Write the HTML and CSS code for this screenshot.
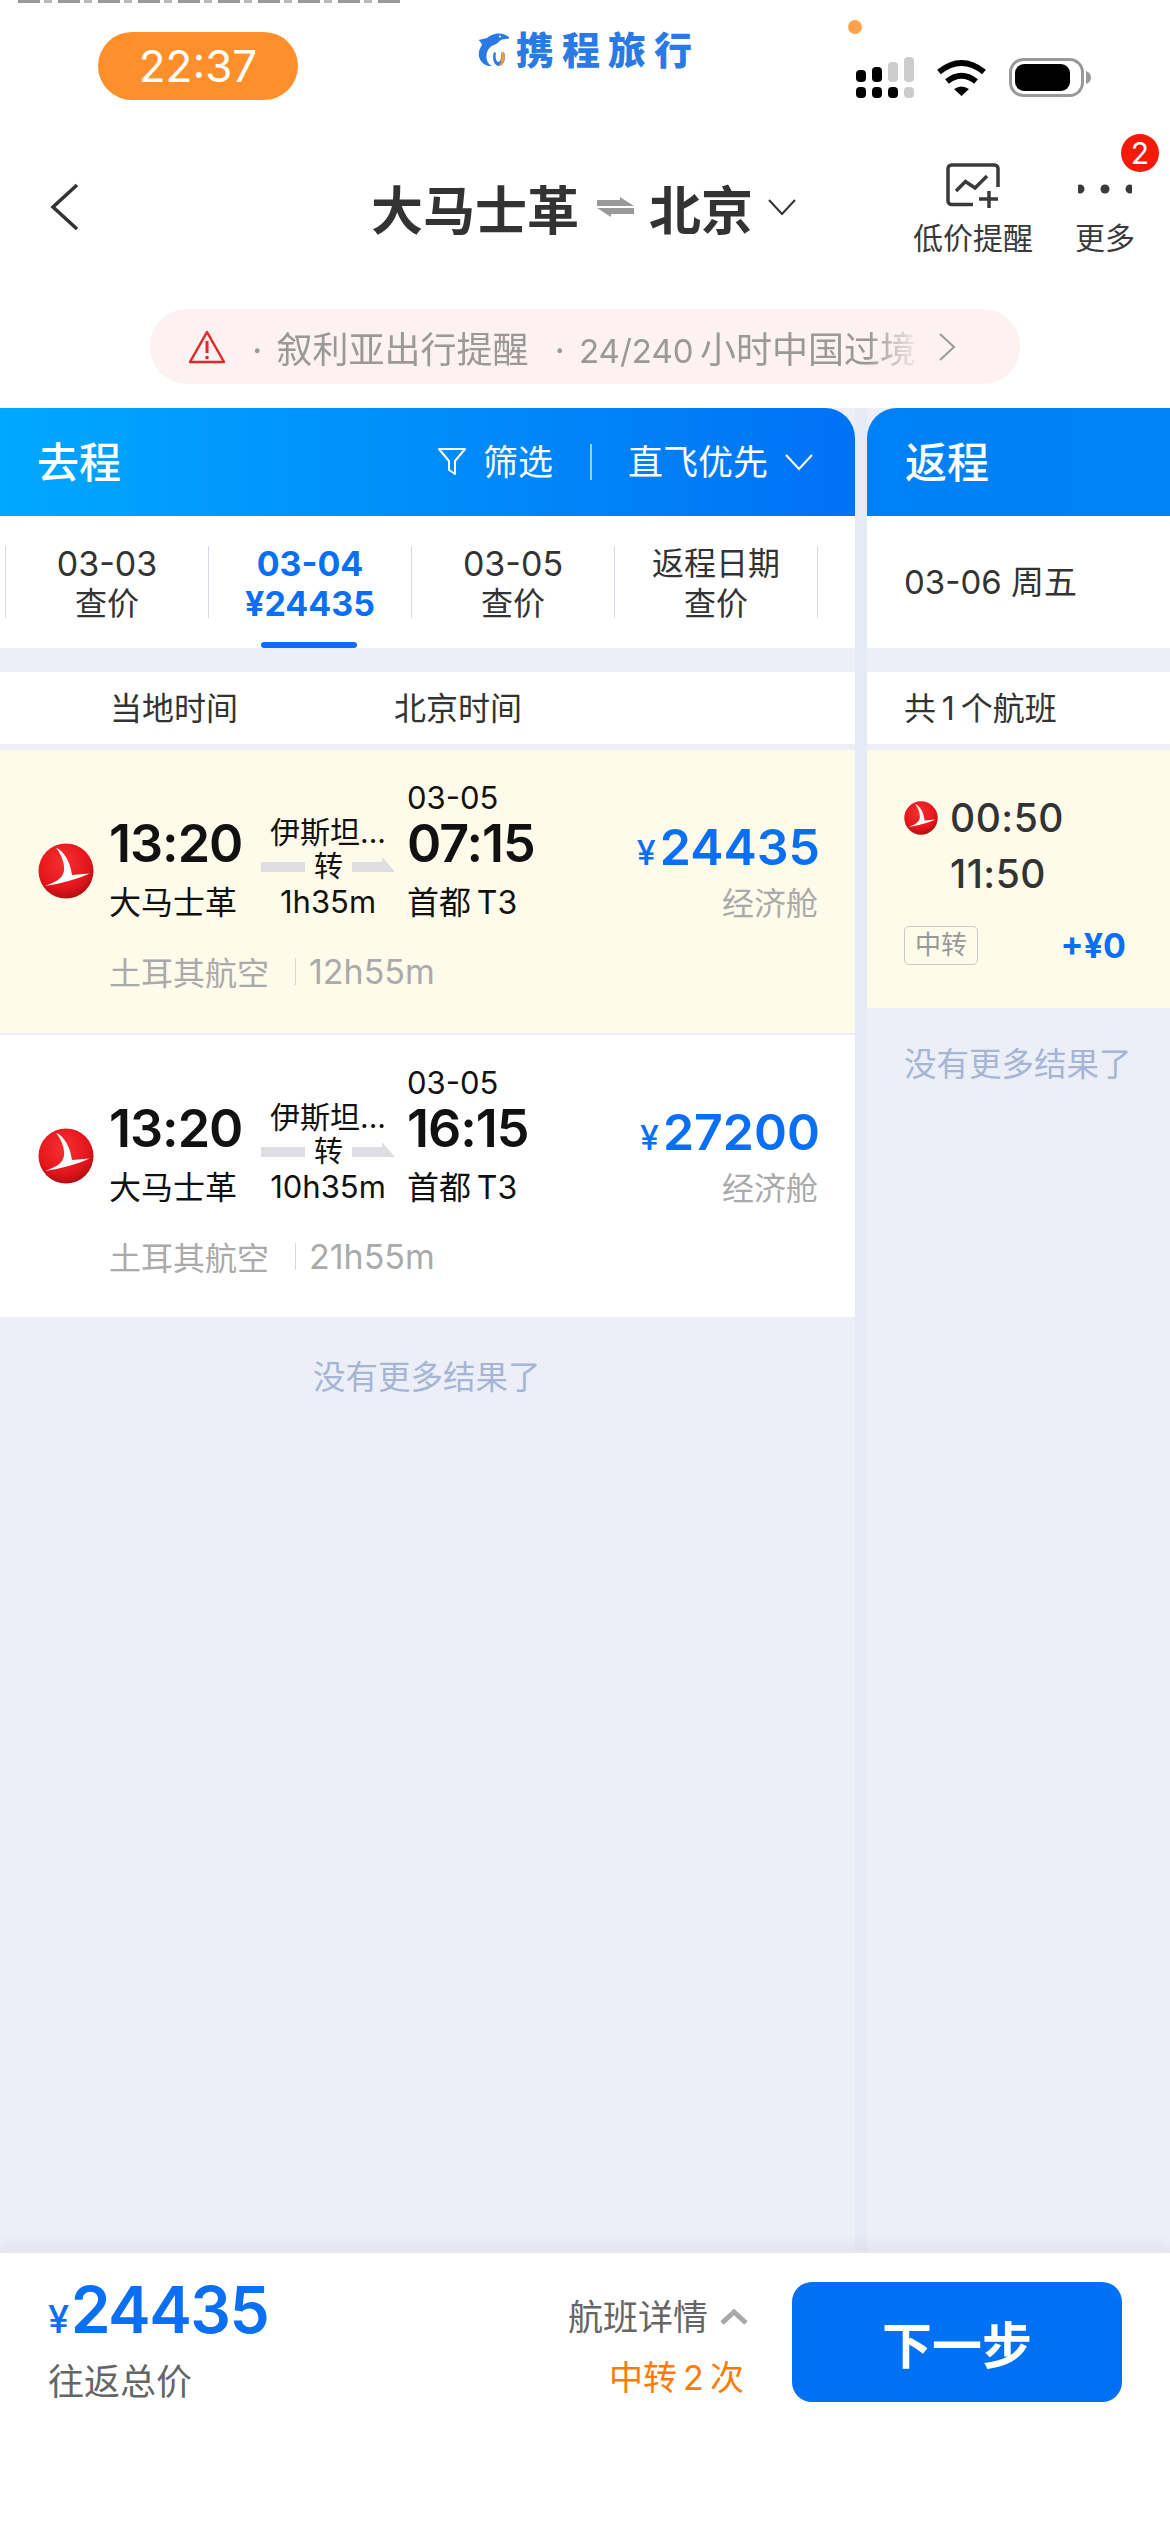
FILE: index.html
```html
<!DOCTYPE html>
<html lang="zh-CN">
<head>
    <meta charset="UTF-8">
    <meta name="viewport" content="width=device-width, initial-scale=1.0">
    <title>大马士革 - 北京</title>
    <link rel="stylesheet" href="styles.css">
</head>
<body>

    <svg class="defs" width="0" height="0">
        <defs>
            <radialGradient id="thyRed" cx="45%" cy="35%" r="70%">
                <stop offset="0%" stop-color="#f7302f"/>
                <stop offset="65%" stop-color="#e5161c"/>
                <stop offset="100%" stop-color="#a80c10"/>
            </radialGradient>
            <symbol id="thyLogo" viewBox="0 0 56 56">
                <circle cx="28" cy="28" r="27.5" fill="url(#thyRed)"/>
                <path d="M18 4.700C26 8 32 18 34 32L51.500 30.500C40 36 22 41 7 43C18 39 24 36 26 28C27 20 23 11 18 4.700Z" fill="#fff"/>
            </symbol>
        </defs>
    </svg>

    <div class="top-strip"></div>

    <div class="status">
        <div class="clock">22:37</div>
        <div class="brand">
            <svg class="dolphin" viewBox="0 0 32 34" width="32" height="34">
                <path d="M31 4C27 1 23 0 19 .5C15 1 11 3 9 5L.5 7C2 8 3.500 10 4 12C1 16 0 21 1.500 25C3 30 8 33.500 14 33C10 31 8 27 8.500 22C9 17 12 13 17 11.500C19 11 21 8 24 6.500L31 5.500Z" fill="#2a7ae4"/>
                <path d="M16 19C14 24 15 31 20 33C24 33.500 27 29 27 24C27 22 26.500 20 25.500 19L23 20C23.500 24 23 29 20 29C18 28 17 24 18 20Z" fill="#2a7ae4"/>
                <path d="M23 20L25.500 19C27 21 27.500 25 26 28C25 31 23 33 20 33C23 31 24 26 23 20Z" fill="#f39a2b"/>
                <circle cx="22" cy="3.500" r="1" fill="#fff"/>
            </svg>
            <span class="brand-name">携程旅行</span>
        </div>
        <div class="status-icons">
            <svg width="58" height="41" viewBox="0 0 58 41">
                <rect x="0" y="13" width="10" height="12" rx="4" fill="#000"/>
                <rect x="16" y="10" width="10" height="15" rx="4" fill="#000"/>
                <rect x="32" y="5" width="10" height="20" rx="4" fill="#ccc"/>
                <rect x="48" y="0" width="10" height="25" rx="4" fill="#ccc"/>
                <rect x="0" y="30" width="10" height="11" rx="4" fill="#000"/>
                <rect x="16" y="30" width="10" height="11" rx="4" fill="#000"/>
                <rect x="32" y="30" width="10" height="11" rx="4" fill="#000"/>
                <rect x="48" y="30" width="10" height="11" rx="4" fill="#ccc"/>
            </svg>
            <svg width="51" height="38" viewBox="0 0 51 38">
                <path d="M3 13Q25.500 -5 48 13" fill="none" stroke="#000" stroke-width="6"/>
                <path d="M11 22.500Q25.500 11 40 22.500" fill="none" stroke="#000" stroke-width="6"/>
                <path d="M18 30Q25.500 25 33 30L25.500 37Z" fill="#000"/>
            </svg>
            <svg width="82" height="39" viewBox="0 0 82 39">
                <rect x="1.500" y="1.500" width="72" height="36" rx="13" fill="none" stroke="#999" stroke-width="3"/>
                <rect x="6" y="6" width="55" height="27" rx="9" fill="#000"/>
                <path d="M77 13C80 14 82 16 82 19.500C82 23 80 25 77 26Z" fill="#999"/>
            </svg>
        </div>
        <span class="rec-dot"></span>
    </div>

    <header class="nav">
        <svg class="back" width="30" height="48" viewBox="0 0 30 48">
            <path d="M27 2L3 24L27 46" fill="none" stroke="#333" stroke-width="3.500"/>
        </svg>
        <div class="route">
            <span>大马士革</span>
            <svg class="route-swap" width="37" height="20" viewBox="0 0 37 20">
                <path d="M0 3H23V0L37 9H0Z" fill="#999"/>
                <path d="M37 11H0L14 20V17H37Z" fill="#999"/>
            </svg>
            <span>北京</span>
            <svg class="route-down" width="28" height="17" viewBox="0 0 28 17">
                <path d="M1 1L14 15L27 1" fill="none" stroke="#333" stroke-width="2"/>
            </svg>
        </div>
        <div class="nav-actions">
            <div class="action">
                <svg width="54" height="46" viewBox="0 0 54 46">
                    <path d="M52 24V5.500A3.500 3.500 0 0 0 48.500 2H5.500A3.500 3.500 0 0 0 2 5.500V38A3.500 3.500 0 0 0 5.500 41.500H27" fill="none" stroke="#3a3a3a" stroke-width="3.500"/>
                    <path d="M10 28L19.500 18.500L29 25L41 13" fill="none" stroke="#3a3a3a" stroke-width="3.500"/>
                    <path d="M33 36H52M43 28V45" fill="none" stroke="#3a3a3a" stroke-width="3.500"/>
                </svg>
                <span>低价提醒</span>
            </div>
            <div class="action">
                <svg width="54" height="46" viewBox="0 0 54 46">
                    <circle cx="2" cy="26" r="4.500" fill="#3a3a3a"/>
                    <circle cx="27" cy="26" r="4.500" fill="#3a3a3a"/>
                    <circle cx="52" cy="26" r="4.500" fill="#3a3a3a"/>
                </svg>
                <span>更多</span>
                <b class="badge">2</b>
            </div>
        </div>
    </header>

    <div class="notice">
        <svg width="38" height="36" viewBox="0 0 38 36">
            <path d="M19 3L36 33H2Z" fill="none" stroke="#e0292b" stroke-width="2.500" stroke-linejoin="round"/>
            <path d="M19 12V24" stroke="#e0292b" stroke-width="3"/>
            <circle cx="19" cy="28.500" r="1.800" fill="#e0292b"/>
        </svg>
        <div class="notice-text">
            <span>· 叙利亚出行提醒</span>
            <span>· <span class="notice-num">24/240</span>&thinsp;小时中国过境</span>
        </div>
        <svg width="18" height="28" viewBox="0 0 18 28">
            <path d="M2 1L16 14L2 27" fill="none" stroke="#999" stroke-width="2"/>
        </svg>
    </div>

    <main class="board">
        <section class="col col-out">
            <div class="col-head head-out">
                <span class="col-title">去程</span>
                <div class="head-tools">
                    <svg width="30" height="30" viewBox="0 0 30 30">
                        <path d="M2 2H28L18 14V27L12 23V14Z" fill="none" stroke="#fff" stroke-width="2" stroke-linejoin="round"/>
                    </svg>
                    <span class="tool-filter">筛选</span>
                    <i class="tool-sep"></i>
                    <span>直飞优先</span>
                    <svg class="tool-down" width="28" height="17" viewBox="0 0 28 17">
                        <path d="M1 1L14 15L27 1" fill="none" stroke="#fff" stroke-width="2"/>
                    </svg>
                </div>
            </div>

            <div class="tabs">
                <div class="tab"><span class="tab-num">03-03</span><span>查价</span></div>
                <div class="tab active"><span class="tab-num">03-04</span><span class="tab-num">¥24435</span></div>
                <div class="tab"><span class="tab-num">03-05</span><span>查价</span></div>
                <div class="tab"><span>返程日期</span><span>查价</span></div>
            </div>

            <div class="zone-row">
                <span class="zone-local">当地时间</span>
                <span>北京时间</span>
            </div>

            <article class="flight picked">
                <svg class="flight-logo" width="56" height="56"><use href="#thyLogo"/></svg>
                <div class="leg">
                    <div class="clock-time">13:20</div>
                    <div class="leg-sub">大马士革</div>
                </div>
                <div class="stop">
                    <div class="stop-city">伊斯坦...</div>
                    <div class="stop-line">
                        <i class="line-left"></i>
                        <span>转</span>
                        <svg width="43" height="15" viewBox="0 0 43 15"><path d="M0 5H30V0L43 15H0Z" fill="#dddde2"/></svg>
                    </div>
                    <div class="stop-time">1h35m</div>
                </div>
                <div class="leg leg-arrive">
                    <div class="leg-date">03-05</div>
                    <div class="clock-time">07:15</div>
                    <div class="leg-sub">首都&thinsp;T3</div>
                </div>
                <div class="fare">
                    <div class="fare-price"><small>¥</small>24435</div>
                    <div class="fare-class">经济舱</div>
                </div>
                <div class="flight-foot">
                    <span>土耳其航空</span>
                    <i class="foot-sep"></i>
                    <span class="foot-time">12h55m</span>
                </div>
            </article>

            <article class="flight">
                <svg class="flight-logo" width="56" height="56"><use href="#thyLogo"/></svg>
                <div class="leg">
                    <div class="clock-time">13:20</div>
                    <div class="leg-sub">大马士革</div>
                </div>
                <div class="stop">
                    <div class="stop-city">伊斯坦...</div>
                    <div class="stop-line">
                        <i class="line-left"></i>
                        <span>转</span>
                        <svg width="43" height="15" viewBox="0 0 43 15"><path d="M0 5H30V0L43 15H0Z" fill="#dddde2"/></svg>
                    </div>
                    <div class="stop-time">10h35m</div>
                </div>
                <div class="leg leg-arrive">
                    <div class="leg-date">03-05</div>
                    <div class="clock-time">16:15</div>
                    <div class="leg-sub">首都&thinsp;T3</div>
                </div>
                <div class="fare">
                    <div class="fare-price"><small>¥</small>27200</div>
                    <div class="fare-class">经济舱</div>
                </div>
                <div class="flight-foot">
                    <span>土耳其航空</span>
                    <i class="foot-sep"></i>
                    <span class="foot-time">21h55m</span>
                </div>
            </article>

            <div class="no-more no-more-out">没有更多结果了</div>
        </section>

        <section class="col col-ret">
            <div class="col-head head-ret">
                <span class="col-title">返程</span>
            </div>
            <div class="ret-date">03-06 周五</div>
            <div class="zone-row ret-count">共&thinsp;1&thinsp;个航班</div>
            <article class="ret-flight">
                <div class="ret-times">
                    <svg width="34" height="34"><use href="#thyLogo"/></svg>
                    <span>00:50</span>
                    <span class="ret-arrive">11:50</span>
                </div>
                <div class="ret-foot">
                    <span class="tag">中转</span>
                    <span class="ret-extra">+¥0</span>
                </div>
            </article>
            <div class="no-more no-more-ret">没有更多结果了</div>
        </section>
    </main>

    <footer class="bottom">
        <div class="total">
            <div class="total-price"><small>¥</small>24435</div>
            <div class="total-label">往返总价</div>
        </div>
        <div class="details">
            <div class="details-link">
                航班详情
                <svg width="28" height="16" viewBox="0 0 28 16">
                    <path d="M2 14L14 3L26 14" fill="none" stroke="#a8a8a8" stroke-width="5"/>
                </svg>
            </div>
            <div class="details-stops">中转&thinsp;2&thinsp;次</div>
        </div>
        <button class="next" type="button">下一步</button>
    </footer>

</body>
</html>
```

FILE: styles.css
```css
* {
    box-sizing: border-box;
}

body {
    margin: 0;
    width: 1170px;
    height: 2532px;
    overflow: hidden;
    background-color: #fff;
    color: #333;
    font-family: Inter, "Noto Sans CJK SC", sans-serif;
}

i {
    display: block;
}

.defs {
    position: absolute;
}

.top-strip {
    height: 3px;
    margin: 0 770px 0 18px;
    background: repeating-linear-gradient(90deg, #999 0 22px, #fff 22px 26px, #bbb 26px 34px, #fff 34px 40px);
}

/* status bar */
.status {
    position: relative;
    display: flex;
    align-items: flex-start;
    height: 147px;
    padding-left: 98px;
}

.clock {
    width: 200px;
    height: 68px;
    margin-top: 29px;
    border-radius: 34px;
    background-color: #ff8f2b;
    color: #fff;
    font-size: 44px;
    line-height: 68px;
    text-align: center;
}

.brand {
    display: flex;
    align-items: center;
    height: 34px;
    margin: 30px 0 0 180px;
}

.dolphin {
    margin-right: 6px;
}

.brand-name {
    color: #2a7ae4;
    font-size: 38px;
    font-weight: 900;
    line-height: 34px;
    letter-spacing: 8px;
    white-space: nowrap;
}

.status-icons {
    display: flex;
    align-items: center;
    gap: 22px;
    margin: 54px 0 0 auto;
    padding-right: 79px;
}

.rec-dot {
    position: absolute;
    left: 848px;
    top: 17px;
    width: 14px;
    height: 14px;
    border-radius: 50%;
    background-color: #ffa24d;
}

/* nav */
.nav {
    display: flex;
    align-items: flex-start;
    height: 159px;
    padding-left: 50px;
}

.back {
    margin-top: 33px;
}

.route {
    display: flex;
    align-items: center;
    gap: 18px;
    height: 48px;
    margin: 33px 0 0 291px;
    color: #333;
    font-size: 52px;
    font-weight: 700;
    white-space: nowrap;
}

.route-swap {
    margin-right: -3px;
}

.route-down {
    margin-left: -3px;
}

.nav-actions {
    display: flex;
    gap: 37px;
    margin: 13px 30px 0 auto;
}

.action {
    position: relative;
    display: flex;
    flex-direction: column;
    align-items: center;
    min-width: 70px;
    font-size: 30px;
    line-height: 40px;
    color: #3a3a3a;
}

.action span {
    margin-top: 9px;
}

.badge {
    position: absolute;
    left: 51px;
    top: -29px;
    width: 38px;
    height: 38px;
    border-radius: 50%;
    background-color: #f5190a;
    color: #fff;
    font-size: 30px;
    font-weight: 400;
    line-height: 38px;
    text-align: center;
}

/* notice */
.notice {
    display: flex;
    align-items: center;
    width: 870px;
    height: 75px;
    margin-left: 150px;
    padding-left: 38px;
    border-radius: 37px;
    background-color: #fdf1f1;
}

.notice-text {
    display: flex;
    gap: 26px;
    width: 670px;
    margin: 0 16px 0 26px;
    color: #999;
    font-size: 36px;
    word-spacing: 4px;
    white-space: nowrap;
    -webkit-mask-image: linear-gradient(90deg, #000 92%, transparent);
    mask-image: linear-gradient(90deg, #000 92%, transparent);
}

.notice-num {
    font-size: 33px;
}

/* board */
.board {
    display: flex;
    gap: 12px;
    height: 1842px;
    margin-top: 24px;
    background-color: #e6eaf4;
}

.col {
    display: flex;
    flex-direction: column;
    background-color: #eceff7;
}

.col-out {
    width: 855px;
}

.col-ret {
    width: 303px;
    flex: 1;
}

.col-head {
    display: flex;
    align-items: center;
    justify-content: space-between;
    height: 108px;
    color: #fff;
}

.head-out {
    padding: 0 42px 0 37px;
    border-top-right-radius: 30px;
    background: linear-gradient(90deg, #00a8ff, #0072f5);
}

.head-ret {
    padding-left: 38px;
    border-top-left-radius: 30px;
    background: linear-gradient(90deg, #0080f6, #0084f6);
}

.col-title {
    padding-bottom: 6px;
    font-size: 42px;
    font-weight: 500;
}

.head-tools {
    display: flex;
    align-items: center;
    height: 40px;
    font-size: 35px;
    line-height: 38px;
}

.tool-filter {
    margin-left: 16px;
}

.tool-sep {
    width: 2px;
    height: 36px;
    margin: 0 36px 0 37px;
    background-color: rgba(255, 255, 255, 0.6);
}

.tool-down {
    margin-left: 17px;
}

.tabs {
    display: flex;
    height: 132px;
    padding: 30px 0 0 5px;
    background-color: #fff;
}

.tab {
    position: relative;
    display: flex;
    flex-direction: column;
    align-items: center;
    justify-content: center;
    width: 203px;
    height: 72px;
    padding-top: 3px;
    border-left: 1px solid #d5dbe6;
    font-size: 32px;
    line-height: 40px;
}

.tab:last-child {
    width: 204px;
    border-right: 1px solid #d5dbe6;
}

.tab-num {
    font-size: 34px;
}

.tab.active {
    color: #0a6ff5;
    font-weight: 700;
}

.tab.active::after {
    content: "";
    position: absolute;
    left: 52px;
    top: 96px;
    width: 96px;
    height: 6px;
    border-radius: 3px;
    background-color: #0a6ff5;
}

.zone-row {
    display: flex;
    height: 72px;
    margin: 24px 0 6px;
    padding-left: 110px;
    background-color: #fff;
    font-size: 32px;
    line-height: 74px;
}

.zone-local {
    width: 284px;
}

/* flight rows */
.flight {
    display: grid;
    grid-template-columns: 71px 152px 134px 1fr auto;
    padding: 30px 35px 41px 38px;
    margin-bottom: 2px;
    background-color: #fff;
    color: #111;
}

.flight.picked {
    padding-bottom: 42px;
    background-color: #fefbea;
}

.flight-logo {
    margin-top: 63px;
}

.leg {
    padding-top: 34px;
}

.clock-time {
    height: 60px;
    font-size: 52px;
    font-weight: 600;
    line-height: 60px;
    letter-spacing: -1px;
}

.leg-sub {
    height: 60px;
    font-size: 32px;
    line-height: 58px;
    white-space: nowrap;
}

.leg-arrive {
    padding: 0 0 0 12px;
}

.leg-date {
    height: 34px;
    font-size: 31px;
    line-height: 36px;
}

.stop {
    padding-top: 32px;
    text-align: center;
}

.stop-city {
    height: 40px;
    margin: 0 -4px;
    font-size: 30px;
    line-height: 40px;
    white-space: nowrap;
}

.stop-line {
    display: flex;
    align-items: flex-end;
    justify-content: space-between;
    height: 30px;
    padding-bottom: 10px;
    font-size: 29px;
}

.stop-line span {
    height: 30px;
    line-height: 30px;
    margin-bottom: -10px;
}

.line-left {
    width: 44px;
    height: 10px;
    background-color: #dddde2;
}

.stop-time {
    height: 40px;
    margin: 0 -4px;
    font-size: 31px;
    line-height: 40px;
    white-space: nowrap;
}

.fare {
    padding-top: 38px;
    text-align: right;
}

.fare-price {
    height: 58px;
    color: #0a6ff5;
    font-size: 50px;
    font-weight: 600;
    line-height: 58px;
}

.fare-price small {
    margin-right: 4px;
    font-size: 34px;
    font-weight: 500;
}

.fare-class {
    height: 58px;
    margin-right: 2px;
    color: #aaa;
    font-size: 32px;
    line-height: 56px;
}

.flight-foot {
    grid-column: 2 / -1;
    display: flex;
    align-items: center;
    height: 40px;
    margin-top: 17px;
    color: #aaa;
    font-size: 32px;
}

.foot-sep {
    width: 1px;
    height: 27px;
    margin: 0 13px 0 26px;
    background-color: #d8d8d8;
}

.foot-time {
    font-size: 34px;
}

.no-more {
    height: 44px;
    color: #a4b6d4;
    font-size: 32.500px;
    line-height: 44px;
}

.no-more-out {
    margin-top: 37px;
    padding-left: 313px;
}

.no-more-ret {
    margin-top: 35px;
    padding-left: 37px;
}

/* return column */
.ret-date {
    height: 132px;
    padding-left: 37px;
    background-color: #fff;
    font-size: 33px;
    line-height: 132px;
}

.ret-count {
    padding-left: 37px;
}

.ret-flight {
    height: 258px;
    padding: 40px 0 0 37px;
    background-color: #fefbea;
}

.ret-times {
    display: grid;
    grid-template-columns: 46px auto;
    align-items: center;
    font-size: 39px;
    font-weight: 500;
    line-height: 56px;
    letter-spacing: 0.5px;
}

.ret-arrive {
    grid-column: 2;
}

.ret-foot {
    display: flex;
    align-items: center;
    justify-content: space-between;
    width: 222px;
    margin-top: 23px;
}

.tag {
    width: 74px;
    height: 39px;
    border: 1px solid #ccc;
    border-radius: 5px;
    color: #999;
    font-size: 26px;
    line-height: 36px;
    text-align: center;
}

.ret-extra {
    color: #0a6ff5;
    font-size: 34px;
    font-weight: 700;
}

/* bottom bar */
.bottom {
    position: relative;
    display: flex;
    align-items: flex-start;
    height: 282px;
    padding: 29px 48px 0;
    border-top: 3px solid #e8e8ea;
    background-color: #fff;
    box-shadow: 0 -6px 14px rgba(0, 0, 0, 0.05);
}

.total-price {
    height: 56px;
    color: #0a6ff5;
    font-size: 64px;
    font-weight: 600;
    line-height: 56px;
    letter-spacing: -1.500px;
}

.total-price small {
    margin-right: 3px;
    font-size: 38px;
    font-weight: 500;
}

.total-label {
    height: 48px;
    margin-top: 20px;
    color: #666;
    font-size: 36px;
    line-height: 48px;
}

.details {
    margin: 10px 0 0 auto;
    text-align: right;
}

.details-link {
    display: flex;
    align-items: center;
    gap: 12px;
    height: 50px;
    color: #666;
    font-size: 35px;
    line-height: 50px;
}

.details-stops {
    height: 50px;
    margin-top: 11px;
    padding-right: 4px;
    color: #ff7a00;
    font-size: 34px;
    line-height: 50px;
}

.next {
    width: 330px;
    height: 120px;
    margin-left: 44px;
    border: none;
    border-radius: 20px;
    background-color: #0070f5;
    color: #fff;
    font-family: inherit;
    font-size: 50px;
    font-weight: 700;
}
```
